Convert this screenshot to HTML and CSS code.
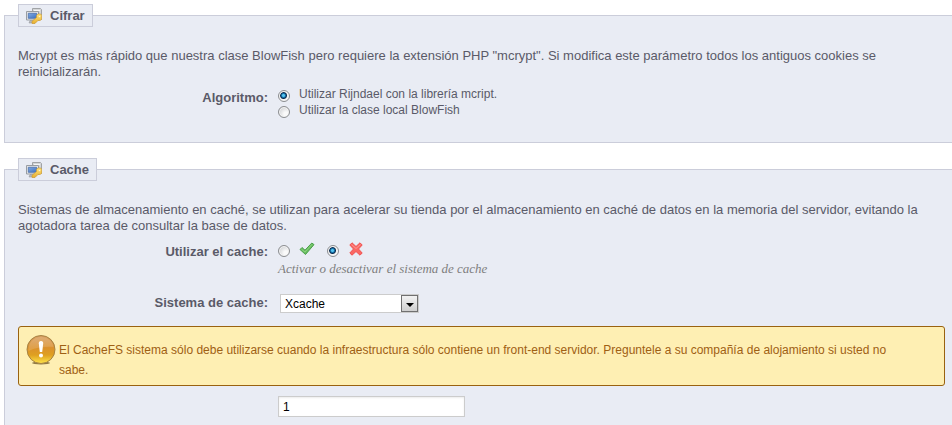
FILE: index.html
```html
<!DOCTYPE html>
<html lang="es">
<head>
<meta charset="utf-8">
<title>Rendimiento</title>
<meta name="viewport" content="width=device-width, initial-scale=1">
<link rel="stylesheet" href="styles.css">
</head>
<body>
<svg class="defs" aria-hidden="true">
  <defs>
    <linearGradient id="screen" x1="0" y1="0" x2="1" y2="1"><stop offset="0" stop-color="#7fa8e0"/><stop offset="1" stop-color="#3f72c0"/></linearGradient>
    <linearGradient id="gold" x1="0" y1="0" x2="0" y2="1"><stop offset="0" stop-color="#ffe27a"/><stop offset="1" stop-color="#e8b030"/></linearGradient>
    <symbol id="computer-key" viewBox="0 0 16 16">
      <path d="M6.500 .5h8l1 1v10h-9z" fill="#d4d6d8" stroke="#a0a3a6"/>
      <path d="M8 2.500h6" stroke="#f5f5f5"/>
      <path d="M.5 3.500h12v8.500h-12z" fill="#e3e5e8" stroke="#999da2"/>
      <path d="M2.300 5.300h8.400v5H2.300z" fill="url(#screen)" stroke="#4b70ac" stroke-width=".8"/>
      <path d="M4 12.500h4l1 2.500H3z" fill="#b5b8bc" stroke="#8e9196" stroke-width=".5"/>
      <path d="M12 6h2.800l1 1.500V11l-1.500 1.500H12L9 15.500H6v-2.200l4.500-3.800V7.500z" fill="url(#gold)" stroke="#c9952e" stroke-width=".6"/>
      <circle cx="13.500" cy="8.500" r=".8" fill="#fff6cf"/>
    </symbol>
  </defs>
</svg>
<form class="settings">
  <fieldset class="panel">
    <legend class="panel-title"><svg class="icon" aria-hidden="true"><use href="#computer-key"/></svg>Cifrar</legend>
    <p class="intro">Mcrypt es más rápido que nuestra clase BlowFish pero requiere la extensión PHP "mcrypt". Si modifica este parámetro todos los antiguos cookies se reinicializarán.</p>
    <div class="row algorithm" role="radiogroup" aria-labelledby="algo">
      <span class="label" id="algo">Algoritmo:</span>
      <div class="field">
        <div class="choice"><input type="radio" name="algo" id="rijndael" checked><label for="rijndael">Utilizar Rijndael con la librería mcript.</label></div>
        <div class="choice"><input type="radio" name="algo" id="blowfish"><label for="blowfish">Utilizar la clase local BlowFish</label></div>
      </div>
    </div>
  </fieldset>

  <fieldset class="panel">
    <legend class="panel-title"><svg class="icon" aria-hidden="true"><use href="#computer-key"/></svg>Cache</legend>
    <p class="intro">Sistemas de almacenamiento en caché, se utilizan para acelerar su tienda por el almacenamiento en caché de datos en la memoria del servidor, evitando la agotadora tarea de consultar la base de datos.</p>
    <div class="row" role="radiogroup" aria-labelledby="use-cache">
      <span class="label" id="use-cache">Utilizar el cache:</span>
      <div class="field">
        <div class="switch">
          <input type="radio" name="cache" id="cache-on">
          <label for="cache-on" aria-label="Sí"><svg class="icon" viewBox="0 0 16 16" aria-hidden="true"><path d="M1 8.500 3 6.500 6 9.200 12.800 2 15 3.600 6.500 13.500z" fill="#69bd60" stroke="#4aa04a" stroke-linejoin="round"/><path d="M2.500 8.300 6 11 13 3.300" fill="none" stroke="#8bd37e"/></svg></label>
          <input type="radio" name="cache" id="cache-off" checked>
          <label for="cache-off" aria-label="No"><svg class="icon" viewBox="0 0 16 16" aria-hidden="true"><path d="M4 1.800 8 5.500 12 1.800 14.200 4 10.500 8 14.200 12 12 14.200 8 10.500 4 14.200 1.800 12 5.500 8 1.800 4z" fill="#fa6863" stroke="#f05050" stroke-linejoin="round"/><path d="M3.500 3.500 8 7.500 12.500 3.500" fill="none" stroke="#ff9691"/></svg></label>
        </div>
        <p class="hint">Activar o desactivar el sistema de cache</p>
      </div>
    </div>
    <div class="row system">
      <label class="label" for="system">Sistema de cache:</label>
      <div class="field">
        <div class="select"><select id="system"><option>Xcache</option></select><span class="arrow" aria-hidden="true"></span></div>
      </div>
    </div>
    <div class="warning" role="note">
      <svg class="warning-icon" viewBox="0 0 30 30" aria-hidden="true">
        <defs><linearGradient id="amber" x1="0" y1="0" x2="0" y2="1"><stop offset="0" stop-color="#d8a065"/><stop offset=".45" stop-color="#db912c"/><stop offset=".7" stop-color="#dfa020"/><stop offset="1" stop-color="#ffe64a"/></linearGradient></defs>
        <ellipse cx="15" cy="28" rx="9" ry="1.500" fill="#8f7a45"/>
        <circle cx="15" cy="14.500" r="14" fill="url(#amber)" stroke="#a78345"/>
        <path d="M2.500 14C3 6 9 2 15 2s12 4 12.500 10C20 11.500 10 12 2.500 16z" fill="#fff" opacity=".14"/>
        <path d="M15 6c1.600 0 2.300 1 2.200 2.500L16.200 17h-2.400l-1-8.500C12.700 7 13.400 6 15 6z" fill="#fff"/>
        <circle cx="15" cy="20.500" r="2" fill="#fff"/>
      </svg>
      <p>El CacheFS sistema sólo debe utilizarse cuando la infraestructura sólo contiene un front-end servidor. Preguntele a su compañía de alojamiento si usted no sabe.</p>
    </div>
    <div class="row">
      <span class="label"></span>
      <div class="field"><input class="text" type="text" value="1" aria-label="Profundidad"></div>
    </div>
  </fieldset>
</form>
</body>
</html>
```
FILE: styles.css
```css
* { box-sizing: border-box; }
body {
  margin: 0;
  background: #fff;
  color: #5a5a68;
  font: 12px/16px "Liberation Sans", Arial, sans-serif;
  overflow: hidden;
}
p { margin: 0; }
.defs { position: absolute; width: 0; height: 0; }
.settings { padding: 4px 0 0 4px; }
.panel {
  min-width: 0;
  margin: 0 0 15px;
  padding: 21px 7px 22px 13px;
  border: 1px solid #cbcdda;
  border-right: 0;
  background: #e9ecf4;
}
.panel-title {
  display: flex;
  align-items: center;
  gap: 8px;
  height: 23px;
  padding: 0 7px;
  border: 1px solid #cbcdda;
  background: #e9ecf4;
  font-size: 13px;
  font-weight: bold;
}
.icon { display: block; width: 16px; height: 16px; }
.intro { padding-right: 16px; font-size: 13px; }
.row { display: flex; gap: 10px; }
.label {
  flex: 0 0 250px;
  padding-top: 10px;
  font-size: 13px;
  font-weight: bold;
  text-align: right;
}
.field { flex: 1; min-width: 0; }
.algorithm { padding-bottom: 2px; }
.algorithm .field { padding-top: 6px; }
input[type="radio"] {
  appearance: none;
  flex: none;
  width: 12px;
  height: 12px;
  margin: 0;
  border: 1px solid #8b8d90;
  border-radius: 50%;
  background: radial-gradient(circle at 70% 70%, #fafafa 20%, #c9cbce 90%);
  box-shadow: inset 0 0 0 1px #f6f6f6;
}
input[type="radio"]:checked {
  background: radial-gradient(circle at 45% 45%, #55c4ee 0 1px, #126ea8 2px, #0b2c4e 3px, #f3f3f3 4px);
}
.choice { display: flex; gap: 9px; height: 16px; }
.choice input[type="radio"] { margin-top: 4px; }
.switch { display: flex; align-items: center; gap: 9px; padding-top: 7px; }
.switch input[type="radio"] { margin-top: 3px; }
.switch label + input[type="radio"] { margin-left: 3px; }
.hint {
  margin-top: 4px;
  color: #7f7f7f;
  font: italic 13px/16px "Liberation Serif", Georgia, serif;
}
.system { padding-top: 17px; }
.system .label { padding-top: 1px; }
.select { position: relative; width: 139px; margin-left: 2px; }
select {
  appearance: none;
  display: block;
  width: 100%;
  height: 19px;
  padding: 0 20px 0 4px;
  border: 1px solid #ccc;
  border-radius: 0;
  background: #fff;
  color: #000;
  font: inherit;
}
.arrow {
  position: absolute;
  top: 1px;
  right: 1px;
  width: 17px;
  height: 17px;
  border: 1px solid #707070;
  background: linear-gradient(#f2f2f2, #cfcfcf);
  pointer-events: none;
}
.arrow::after {
  content: "";
  display: block;
  width: 0;
  margin: 7px auto 0;
  border: 4px solid transparent;
  border-top-color: #000;
  border-bottom: 0;
}
.warning {
  display: flex;
  gap: 3px;
  margin: 13px 0 10px;
  padding: 8px 30px 5px 7px;
  border: 1px solid #996210;
  border-radius: 3px;
  background: #feefb3;
  color: #9e6014;
  line-height: 20px;
}
.warning-icon { flex: none; width: 30px; height: 30px; }
.warning p { padding: 5px 0 0; }
.text {
  display: block;
  width: 187px;
  height: 21px;
  padding: 0 4px;
  border: 1px solid #ccc;
  background: #fff;
  box-shadow: inset 0 1px 2px #ececec;
  color: #000;
  font: inherit;
}
```
